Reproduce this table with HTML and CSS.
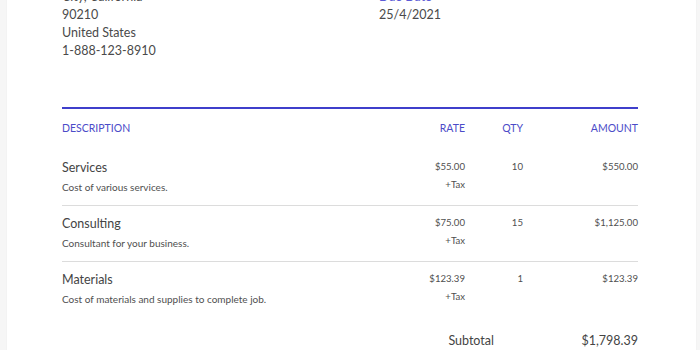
FILE: index.html
```html
<!DOCTYPE html>
<html lang="en">
<head>
<meta charset="utf-8">
<title>Invoice</title>
<link rel="stylesheet" href="styles.css">
</head>
<body>
<div class="page">
  <div class="card">
    <div class="top">
      <div class="address">
        <div>City, California</div>
        <div>90210</div>
        <div>United States</div>
        <div>1-888-123-8910</div>
      </div>
      <div class="meta">
        <div class="meta-label">Due Date</div>
        <div>25/4/2021</div>
      </div>
    </div>

    <div class="table">
      <div class="row head">
        <div>DESCRIPTION</div>
        <div class="num">RATE</div>
        <div class="num">QTY</div>
        <div class="num">AMOUNT</div>
      </div>
      <div class="row item">
        <div>
          <div class="name">Services</div>
          <div class="desc">Cost of various services.</div>
        </div>
        <div class="num small">
          <div>$55.00</div>
          <div>+Tax</div>
        </div>
        <div class="num small">10</div>
        <div class="num small">$550.00</div>
      </div>
      <div class="row item">
        <div>
          <div class="name">Consulting</div>
          <div class="desc">Consultant for your business.</div>
        </div>
        <div class="num small">
          <div>$75.00</div>
          <div>+Tax</div>
        </div>
        <div class="num small">15</div>
        <div class="num small">$1,125.00</div>
      </div>
      <div class="row item last">
        <div>
          <div class="name">Materials</div>
          <div class="desc">Cost of materials and supplies to complete job.</div>
        </div>
        <div class="num small">
          <div>$123.39</div>
          <div>+Tax</div>
        </div>
        <div class="num small">1</div>
        <div class="num small">$123.39</div>
      </div>
    </div>

    <div class="totals">
      <div class="t-label">Subtotal</div>
      <div class="t-value">$1,798.39</div>
    </div>
  </div>
</div>
</body>
</html>
```

FILE: styles.css
```css
html, body {
  margin: 0;
  padding: 0;
}
body {
  background: #f6f6f6;
  font-family: Lato, "Open Sans", sans-serif;
  color: #4a4a4a;
  overflow: hidden;
}
.page {
  height: 350px;
  overflow: hidden;
}
.card {
  background: #ffffff;
  margin: 0 4px 0 7px;
  padding: 0 58px 40px 55px;
  min-height: 400px;
  box-shadow: 0 0 2px rgba(0,0,0,0.04);
}
.top {
  display: flex;
  margin-top: -12px;
  font-size: 12.5px;
  line-height: 18px;
}
.address {
  width: 317px;
}
.meta-label {
  color: #5b5bd6;
}
.table {
  margin-top: 47px;
  border-top: 2px solid #3f3fcb;
}
.row {
  display: grid;
  grid-template-columns: 1fr 80px 58px 115px;
}
.num {
  text-align: right;
}
.head {
  font-size: 10.5px;
  line-height: 14px;
  color: #4b4bc8;
  padding: 12px 0 15px;
}
.item {
  padding: 8px 0 9px;
  border-bottom: 1px solid #dcdcdc;
}
.item.last {
  border-bottom: none;
}
.name {
  font-size: 12.5px;
  line-height: 20px;
  color: #444;
}
.desc {
  font-size: 10px;
  line-height: 18px;
  color: #4f4f4f;
}
.small {
  font-size: 9.6px;
  line-height: 18px;
  color: #4f4f4f;
}
.totals {
  display: flex;
  justify-content: flex-end;
  margin-top: 14px;
  font-size: 12.5px;
  line-height: 20px;
  color: #444;
}
.t-label {
  text-align: right;
}
.t-value {
  width: 144px;
  text-align: right;
}
```
